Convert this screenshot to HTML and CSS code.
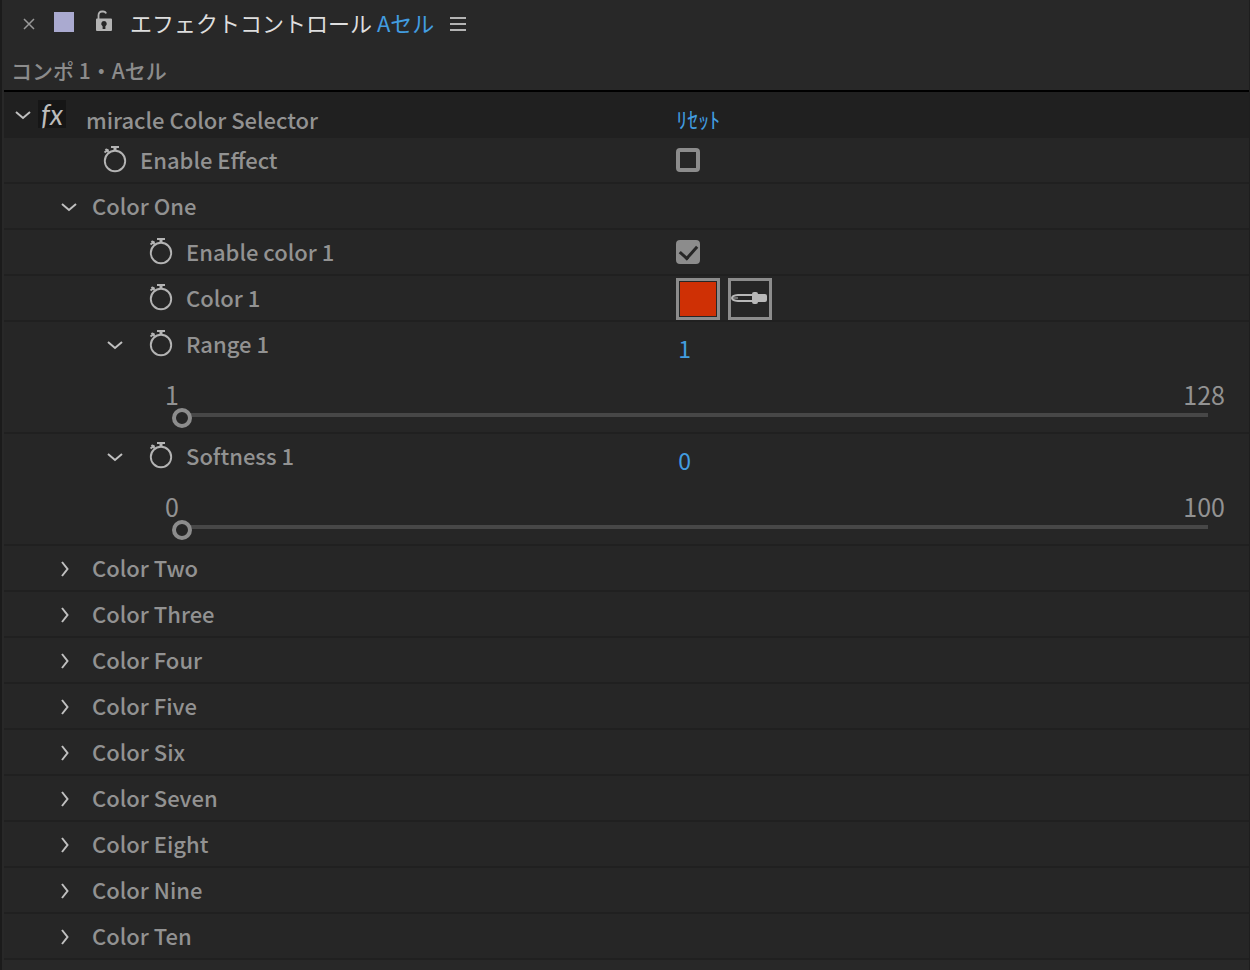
FILE: index.html
```html
<!DOCTYPE html>
<html lang="ja">
<head>
<meta charset="utf-8">
<meta name="viewport" content="width=device-width, initial-scale=1">
<title>エフェクトコントロール</title>
<link rel="stylesheet" href="styles.css">
</head>
<body>
<svg class="defs" aria-hidden="true">
  <symbol id="down" viewBox="0 0 16 16"><path d="M1 5l7 6 7-6" fill="none" stroke="currentColor" stroke-width="2"/></symbol>
  <symbol id="right" viewBox="0 0 16 16"><path d="M5 1l5.500 7L5 15" fill="none" stroke="currentColor" stroke-width="2"/></symbol>
  <symbol id="watch" viewBox="0 0 24 28"><g fill="none" stroke="currentColor"><circle cx="12" cy="15" r="10.200" stroke-width="1.900"/><path d="M8 1h8M2.500 3l3 3M1.500 6.500l4-3" stroke-width="2"/><path d="M12 1v4" stroke-width="3"/></g></symbol>
</svg>
<main class="panel">
  <header class="tabs">
    <button class="close" aria-label="閉じる"><svg viewBox="0 0 12 12"><path d="M1 1l10 10M11 1L1 11" stroke="currentColor" stroke-width="1.500"/></svg></button>
    <span class="chip"></span>
    <button class="lock" aria-label="ロック"><svg viewBox="0 0 18 22"><path d="M3.500 10V5.500Q3.500 1.500 7 1.500h1q2.500 0 3 2" fill="none" stroke="currentColor" stroke-width="1.800"/><path fill="currentColor" fill-rule="evenodd" d="M2 8.500h14q1 0 1 1V20q0 1-1 1H2q-1 0-1-1V9.500q0-1 1-1zM9 11a2.800 2.800 0 0 0-1.400 5.200V19h2.800v-2.800A2.800 2.800 0 0 0 9 11z"/></svg></button>
    <h1 class="title">エフェクトコントロール <span class="accent">Aセル</span></h1>
    <button class="menu" aria-label="メニュー"><svg viewBox="0 0 18 16"><path d="M1 2h16M1 8h16M1 14h16" stroke="currentColor" stroke-width="2"/></svg></button>
  </header>
  <div class="source">コンポ 1・Aセル</div>
  <section class="rows">
    <div class="row effect">
      <div class="name">
        <button class="twirl" aria-label="閉じる"><svg><use href="#down"/></svg></button>
        <button class="fx" aria-label="fx">fx</button>
        <span class="effect-name">miracle Color Selector</span>
      </div>
      <button class="reset">ﾘｾｯﾄ</button>
    </div>
    <div class="row">
      <div class="name level-one"><button class="watch" aria-label="ストップウォッチ"><svg><use href="#watch"/></svg></button><label for="enable">Enable Effect</label></div>
      <input class="check" type="checkbox" id="enable">
    </div>
    <div class="row">
      <div class="name group"><button class="twirl" aria-label="閉じる"><svg><use href="#down"/></svg></button><span>Color One</span></div>
    </div>
    <div class="row">
      <div class="name level-two"><button class="watch" aria-label="ストップウォッチ"><svg><use href="#watch"/></svg></button><label for="enable1">Enable color 1</label></div>
      <input class="check" type="checkbox" id="enable1" checked>
    </div>
    <div class="row">
      <div class="name level-two"><button class="watch" aria-label="ストップウォッチ"><svg><use href="#watch"/></svg></button><span>Color 1</span></div>
      <div class="colors">
        <button class="swatch" aria-label="Color 1"><span class="fill"></span></button>
        <button class="dropper" aria-label="スポイト"><svg viewBox="0 0 38 36"><path d="M22 14H7Q1 14.500 1 17T7 20h15" fill="none" stroke="currentColor" stroke-width="2"/><path d="M2 17h5" stroke="currentColor" stroke-width="1"/><path d="M21 13q0-2 2-2h2q2 0 2 2h7q2 0 2 2v4q0 2-2 2h-7q0 2-2 2h-2q-2 0-2-2z" fill="currentColor"/></svg></button>
      </div>
    </div>
    <div class="row">
      <div class="name level-slider"><button class="twirl" aria-label="閉じる"><svg><use href="#down"/></svg></button><button class="watch" aria-label="ストップウォッチ"><svg><use href="#watch"/></svg></button><label for="range1">Range 1</label></div>
      <input class="value" id="range1" type="text" value="1">
      <div class="scale"><div class="limits"><span>1</span><span>128</span></div><input class="slider" aria-label="Range 1" type="range" min="1" max="128" value="1"></div>
    </div>
    <div class="row">
      <div class="name level-slider"><button class="twirl" aria-label="閉じる"><svg><use href="#down"/></svg></button><button class="watch" aria-label="ストップウォッチ"><svg><use href="#watch"/></svg></button><label for="soft1">Softness 1</label></div>
      <input class="value" id="soft1" type="text" value="0">
      <div class="scale"><div class="limits"><span>0</span><span>100</span></div><input class="slider" aria-label="Softness 1" type="range" min="0" max="100" value="0"></div>
    </div>
    <div class="row"><div class="name group closed"><button class="twirl" aria-label="開く"><svg><use href="#right"/></svg></button><span>Color Two</span></div></div>
    <div class="row"><div class="name group closed"><button class="twirl" aria-label="開く"><svg><use href="#right"/></svg></button><span>Color Three</span></div></div>
    <div class="row"><div class="name group closed"><button class="twirl" aria-label="開く"><svg><use href="#right"/></svg></button><span>Color Four</span></div></div>
    <div class="row"><div class="name group closed"><button class="twirl" aria-label="開く"><svg><use href="#right"/></svg></button><span>Color Five</span></div></div>
    <div class="row"><div class="name group closed"><button class="twirl" aria-label="開く"><svg><use href="#right"/></svg></button><span>Color Six</span></div></div>
    <div class="row"><div class="name group closed"><button class="twirl" aria-label="開く"><svg><use href="#right"/></svg></button><span>Color Seven</span></div></div>
    <div class="row"><div class="name group closed"><button class="twirl" aria-label="開く"><svg><use href="#right"/></svg></button><span>Color Eight</span></div></div>
    <div class="row"><div class="name group closed"><button class="twirl" aria-label="開く"><svg><use href="#right"/></svg></button><span>Color Nine</span></div></div>
    <div class="row"><div class="name group closed"><button class="twirl" aria-label="開く"><svg><use href="#right"/></svg></button><span>Color Ten</span></div></div>
  </section>
</main>
</body>
</html>
```
FILE: styles.css
```css
* { box-sizing: border-box; }
body {
  margin: 0;
  background: #282828;
  color: #929292;
  font: 500 22px/32px "Noto Sans CJK JP", sans-serif;
}
button, input { margin: 0; padding: 0; border: 0; background: none; color: inherit; font: inherit; }
svg { display: block; width: 100%; height: 100%; }
.defs { position: absolute; width: 0; height: 0; }
.panel { min-height: 100vh; border-left: 2px solid #1b1b1b; border-right: 1px solid #1e1e1e; padding-left: 2px; }

.tabs { display: flex; align-items: center; height: 48px; padding-left: 19px; color: #b4b4b4; }
.close { width: 12px; height: 12px; color: #999; }
.chip { width: 20px; height: 20px; margin: 0 21px 4px 19px; background: #aaaad0; }
.lock { width: 18px; height: 22px; margin-bottom: 6px; }
.title { margin: 0 0 0 17px; padding-bottom: 4px; font-size: 22px; font-weight: 400; color: #dedede; }
.accent { color: #429de0; }
.menu { width: 18px; height: 16px; margin-left: 15px; }

.source { height: 42px; padding: 6px 7px 0; font-size: 21px; color: #8c8c8c; }

.rows { border-top: 2px solid #000; background: #262626; }
.row {
  display: grid;
  grid-template-columns: 54% 1fr;
  align-items: center;
  min-height: 46px;
  border-bottom: 2px solid #202020;
}
.effect { background: #202020; }
.name { display: flex; align-items: center; }
.name label, .name span { padding-bottom: 2px; }
.twirl { width: 16px; height: 16px; margin-top: 2px; color: #c0c0c0; }
.watch { width: 24px; height: 28px; margin-right: 13px; color: #b4b4b4; }
.effect .name { padding-left: 11px; }
.fx { width: 28px; height: 28px; margin: 0 20px 0 7px; background: #161616; color: #bcbcbc; font: italic 28px/28px Lato, sans-serif; }
.name .effect-name { padding: 10px 0 0; }
.reset { justify-self: start; padding-top: 8px; font-weight: 400; color: #429de0; }
.level-one { padding-left: 99px; }
.group { padding-left: 57px; }
.group .twirl { margin-right: 15px; }
.closed { padding-left: 53px; }
.closed .twirl { margin-right: 19px; }
.level-two { padding-left: 145px; }
.level-slider { height: 44px; padding-left: 103px; }
.level-slider .twirl { margin-right: 26px; }

.check { appearance: none; width: 24px; height: 24px; border: 4px solid #8c8c8c; border-radius: 4px; }
.check:checked { display: grid; place-items: start center; background: #8c8c8c; }
.check:checked::after { content: ""; width: 8px; height: 14px; border: solid #262626; border-width: 0 3px 3px 0; transform: translateY(-2px) rotate(42deg); }
.colors { display: flex; gap: 8px; padding-top: 2px; }
.swatch, .dropper { width: 44px; height: 42px; border: 3px solid #8c8c8c; color: #b8b8b8; }
.swatch { padding: 1px; }
.fill { display: block; height: 100%; background: #cf3005; }
.value { width: 100px; padding: 8px 0 0 2px; font-size: 23px; font-weight: 400; color: #429de0; }
.scale { grid-column: 1 / -1; height: 66px; padding: 18px 24px 0 161px; }
.limits { display: flex; justify-content: space-between; height: 20px; font-size: 25px; font-weight: 400; line-height: 20px; }
.slider { appearance: none; display: block; width: calc(100% - 24px); height: 20px; margin: 1px 0 0 7px; }
.slider::-webkit-slider-runnable-track { height: 4px; background: linear-gradient(90deg, transparent 10px, #474747 10px); }
.slider::-webkit-slider-thumb { appearance: none; width: 20px; height: 20px; margin-top: -5px; border: 4px solid #8c8c8c; border-radius: 50%; background: #262626; }
```
